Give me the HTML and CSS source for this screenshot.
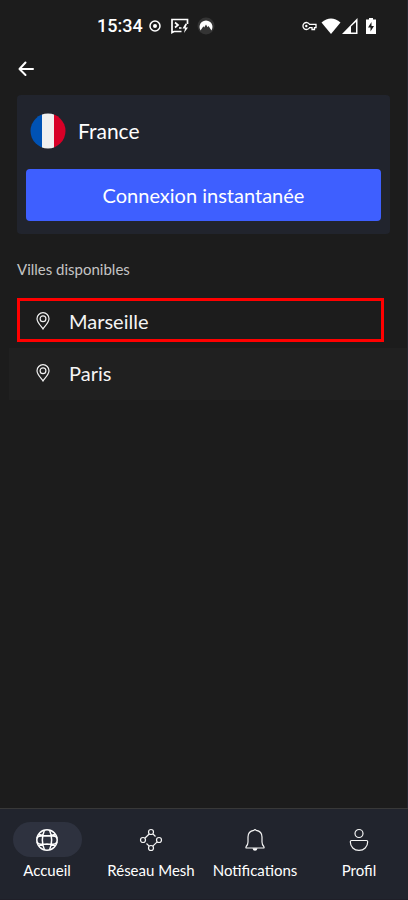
FILE: index.html
```html
<!DOCTYPE html>
<html lang="fr">
<head>
<meta charset="utf-8">
<meta name="viewport" content="width=device-width, initial-scale=1">
<title>France</title>
<link rel="stylesheet" href="styles.css">
</head>
<body>
<div class="screen">
  <div class="status">
    <div class="status-left">
      <span class="clock">15:34</span>
      <svg width="12" height="12" viewBox="0 0 12 12"><circle cx="6" cy="6" r="5" fill="none" stroke="#fff" stroke-width="1.5"/><circle cx="6" cy="6" r="2" fill="#fff"/></svg>
      <svg class="terminal" width="18" height="16" viewBox="0 0 18 16" fill="none" stroke="#fff" stroke-width="1.7"><path d="M10.500 13.500H3L1 14.500V1.500H16.500V6M4 4.500L7 7L4 9.500M8 10H10.500"/><path d="M14.500 5.500L11.500 10.500H14L13 15L17 9.500H14.500L16 6Z" fill="#fff" stroke="none"/></svg>
      <svg width="18" height="18" viewBox="0 0 18 18"><circle cx="9" cy="9" r="8.500" fill="#343434"/><path d="M3.500 13.500A6.500 6.500 0 1 1 14.500 13.500L11.500 9L10.600 10.300L9 7.500L7.200 10.500L6.400 9.300Z" fill="#fff"/></svg>
    </div>
    <div class="status-right">
      <svg width="15" height="10" viewBox="0 0 15 10"><path d="M7.500 3.300A3.500 3.500 0 1 0 7.500 6.700H10V8.500H12.500V6.700H14V3.300Z" fill="none" stroke="#fff" stroke-width="1.300"/><circle cx="4.300" cy="5" r="1.200" fill="#fff"/></svg>
      <svg class="wifi" width="20" height="16" viewBox="0 0 20 16"><path d="M.5 4.500Q10-3.500 19.500 4.500L10 16Z" fill="#fff"/></svg>
      <svg width="16" height="16" viewBox="0 0 16 16"><path fill-rule="evenodd" d="M0 16L15.500 0V16ZM9 8.500V14.500H14V4Z" fill="#fff"/></svg>
      <svg class="battery" width="10" height="16" viewBox="0 0 10 16"><path d="M3 0H7V1.500H10V16H0V1.500H3Z" fill="#fff"/><path d="M5.500 4L2 9.500H4.500V13.500L8 8H5.500Z" fill="#1c1c1c"/></svg>
    </div>
  </div>
  <header class="top">
    <button class="back" type="button" aria-label="Retour"><svg width="16" height="16" viewBox="0 0 16 16" fill="none" stroke="#fff" stroke-width="2" stroke-linecap="round" stroke-linejoin="round"><path d="M15 8H1.500M7.500 1.500L1.500 8L7.500 14"/></svg></button>
  </header>
  <main>
    <section class="card">
      <div class="country">
        <svg width="36" height="36" viewBox="0 0 36 36"><clipPath id="round"><circle cx="18" cy="18" r="17.500"/></clipPath><g clip-path="url(#round)"><path fill="#0052b4" d="M0 0H12V36H0Z"/><path fill="#f0f0f0" d="M12 0H24V36H12Z"/><path fill="#d80027" d="M24 0H36V36H24Z"/></g></svg>
        <h1>France</h1>
      </div>
      <button class="connect" type="button">Connexion instantanée</button>
    </section>
    <h2>Villes disponibles</h2>
    <div class="cities">
      <button class="city marked" type="button"><svg width="14" height="18" viewBox="0 0 14 18" fill="none" stroke="#f2f2f2" stroke-width="1.200"><path d="M7 17C5.500 14.500 1 10.500 1 6.700A6 6 0 0 1 13 6.700C13 10.500 8.500 14.500 7 17Z"/><circle cx="7" cy="6.700" r="2.900"/></svg>Marseille</button>
      <button class="city" type="button"><svg width="14" height="18" viewBox="0 0 14 18" fill="none" stroke="#f2f2f2" stroke-width="1.200"><path d="M7 17C5.500 14.500 1 10.500 1 6.700A6 6 0 0 1 13 6.700C13 10.500 8.500 14.500 7 17Z"/><circle cx="7" cy="6.700" r="2.900"/></svg>Paris</button>
    </div>
  </main>
  <nav>
    <a href="#accueil" class="active"><span class="pill"><svg width="24" height="24" viewBox="0 0 24 24" fill="none" stroke="#fff" stroke-width="1.500"><circle cx="12" cy="12" r="10.200"/><path d="M9.500 2Q5.200 12 9.500 22M14.500 2Q18.800 12 14.500 22M4 6.500Q12 9.500 20 6.500M4 17.500Q12 14.500 20 17.500M2 10Q3 7.700 8 7.700H16Q21 7.700 22 10M2 14Q3 16.300 8 16.300H16Q21 16.300 22 14"/></svg></span>Accueil</a>
    <a href="#mesh"><span class="pill"><svg width="24" height="24" viewBox="0 0 24 24" fill="none" stroke="#f4f4f4" stroke-width="1.200"><circle cx="12" cy="4" r="2.500"/><circle cx="4" cy="12" r="2.500"/><circle cx="20" cy="12" r="2.500"/><circle cx="12" cy="20" r="2.500"/><path d="M10.200 6L5.800 10.200M14 6L16.500 8.500M7.500 15.500L10.200 18.200M18.200 13.800L13.800 18.200"/></svg></span>Réseau Mesh</a>
    <a href="#notifications"><span class="pill"><svg width="24" height="24" viewBox="0 0 24 24" fill="none" stroke="#f4f4f4" stroke-width="1.200"><path d="M10.800 2.300Q12 .8 13.200 2.300C17 2.900 19 5.500 19 9V14C19 16 19.500 17 20.800 18.500Q21.500 20 20.500 20H3.500Q2.500 20 3.200 18.500C4.500 17 5 16 5 14V9C5 5.500 7 2.900 10.800 2.300Z"/><path d="M9.500 20.300H14.500Q14 22.800 12 22.800T9.500 20.300Z" fill="#fff" stroke="none"/></svg></span>Notifications</a>
    <a href="#profil"><span class="pill"><svg width="24" height="24" viewBox="0 0 24 24" fill="none" stroke="#f4f4f4" stroke-width="1.200"><circle cx="12" cy="5.500" r="4"/><path d="M4.500 12.500H19.500Q20.700 12.500 20.700 13.800C20.700 19 17 22.400 12 22.400S3.300 19 3.300 13.800Q3.300 12.500 4.500 12.500Z"/></svg></span>Profil</a>
  </nav>
</div>
</body>
</html>
```
FILE: styles.css
```css
* { box-sizing: border-box; }
body { margin: 0; background: #1c1c1c; color: #fff; font-family: Lato, sans-serif; }
button { border: 0; padding: 0; margin: 0; color: inherit; font: inherit; background: none; }
svg { display: block; flex: none; }
.screen { min-height: 100vh; display: flex; flex-direction: column; border-right: 1px solid #24252f; }
.status { height: 51px; display: flex; align-items: center; justify-content: space-between; padding: 0 31px 0 97px; }
.status-left { display: flex; align-items: center; gap: 8px; }
.clock { font: 500 18px/20px Roboto, sans-serif; margin-right: -2px; }
.terminal { margin-left: 2px; }
.status-right { display: flex; align-items: center; gap: 4px; }
.wifi { margin-right: -3px; }
.battery { margin-left: 4px; }
.top { height: 44px; padding: 10px 18px; }
.back { display: block; }
main { flex: 1; }
.card { margin: 0 17px; padding: 17px 9px 13px; border-radius: 4px; background: #21242d; }
.country { display: flex; align-items: center; gap: 12px; padding: 0 4px; margin-bottom: 21px; }
h1 { margin: 0; font-size: 21px; line-height: 38px; font-weight: 400; }
.country { margin-bottom: 19px; }
.connect { display: block; width: 100%; height: 52px; border-radius: 4px; background: #3e5fff; font-size: 20px; }
h2 { margin: 25px 17px 0; font-size: 15px; line-height: 20px; font-weight: 400; color: #c4c4c4; }
.cities { margin-top: 19px; }
.city { display: flex; align-items: center; gap: 19px; width: calc(100% - 9px); height: 52px; margin-left: 9px; padding: 0 0 2px 27px; background: #202020; color: #f4f4f4; font-size: 20px; }
.marked { height: 44px; width: calc(100% - 40px); margin: 0 23px 6px 17px; padding: 2px 0 0 16px; border: 3px solid #f00; background: none; }
nav { display: grid; grid-template-columns: repeat(4, 1fr); margin: 0 -4px 0 -5px; height: 92px; padding-top: 13px; border-top: 1px solid #383838; background: #21242d; border-bottom: 1px solid #1f1f28; }
nav a { display: flex; flex-direction: column; align-items: center; gap: 3px; color: #fff; text-decoration: none; font-size: 15px; line-height: 20px; white-space: nowrap; }
.pill { display: flex; align-items: center; justify-content: center; width: 69px; height: 35px; border-radius: 18px; }
.active .pill { background: #2e323f; }
```
